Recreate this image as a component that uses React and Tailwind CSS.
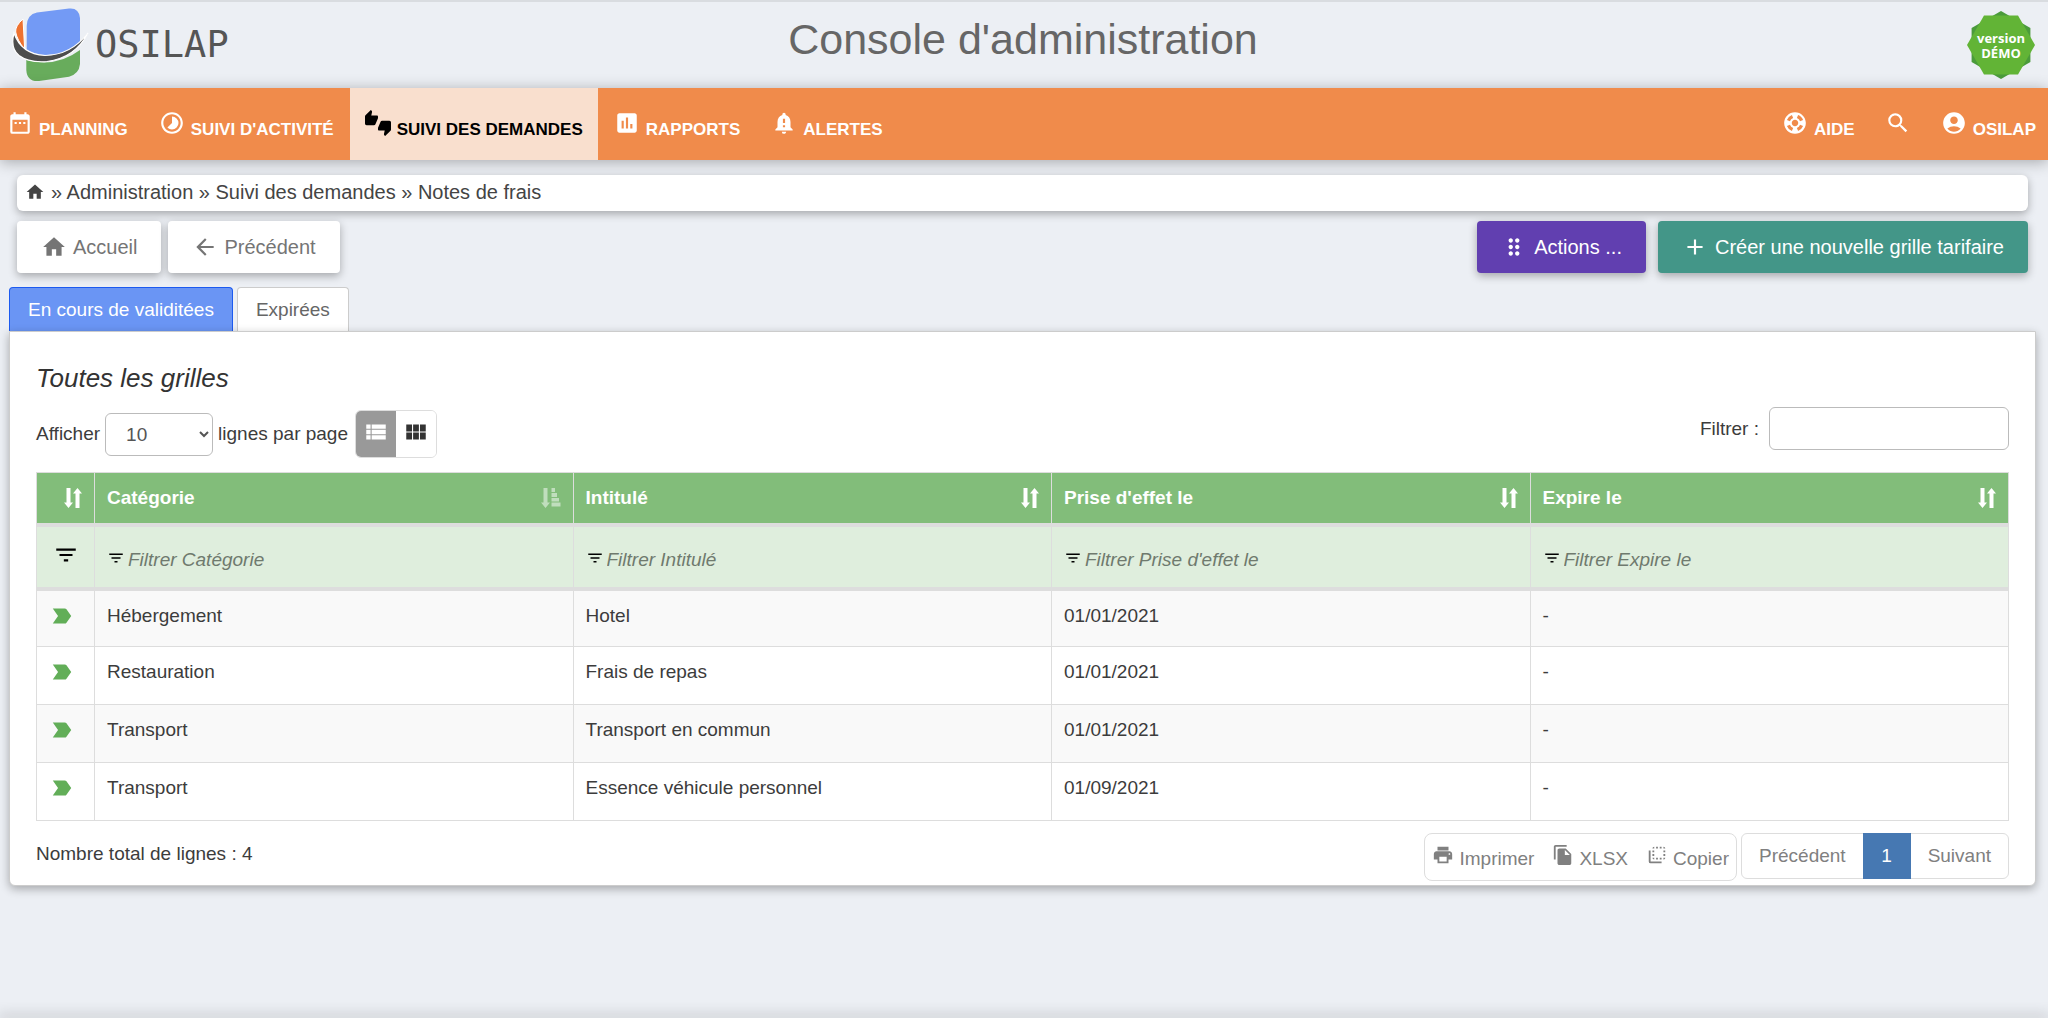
import React, { useState } from 'react';
import {
  MdDateRange,
  MdTimelapse,
  MdThumbsUpDown,
  MdAssessment,
  MdNotificationImportant,
  MdSupport,
  MdSearch,
  MdAccountCircle,
  MdHome,
  MdArrowBack,
  MdDragIndicator,
  MdAdd,
  MdViewList,
  MdViewModule,
  MdFilterList,
  MdLabelImportant,
  MdPrint,
  MdFileCopy,
  MdFlipToBack,
} from 'react-icons/md';

const navLeft = [
  { label: 'PLANNING', icon: MdDateRange },
  { label: "SUIVI D'ACTIVITÉ", icon: MdTimelapse },
  { label: 'SUIVI DES DEMANDES', icon: MdThumbsUpDown, active: true },
  { label: 'RAPPORTS', icon: MdAssessment },
  { label: 'ALERTES', icon: MdNotificationImportant },
];

const navRight = [
  { label: 'AIDE', icon: MdSupport },
  { label: '', icon: MdSearch },
  { label: 'OSILAP', icon: MdAccountCircle },
];

const columns = ['Catégorie', 'Intitulé', "Prise d'effet le", 'Expire le'];

const rows = [
  ['Hébergement', 'Hotel', '01/01/2021', '-'],
  ['Restauration', 'Frais de repas', '01/01/2021', '-'],
  ['Transport', 'Transport en commun', '01/01/2021', '-'],
  ['Transport', 'Essence véhicule personnel', '01/09/2021', '-'],
];

const Logo = () => (
  <a href="#accueil" className="flex items-center gap-1.5 pt-1">
    <svg viewBox="0 0 78 76" className="w-[78px] h-[76px]" aria-hidden="true">
      <path d="M15.700 20 Q16 8.500 26 6.500 L58 2.500 Q68 1.500 69 12 V38 Q56 49 36 49 Q24 49 15.700 44 Z" fill="#739af5" />
      <path d="M15.300 54 Q45 62 69 44 V58 Q68 68 58 70.700 L28 75 Q16 76 15.300 64 Z" fill="#68ac5c" />
      <path d="M12 13 Q4 20 4.700 26 Q6 34 13.700 43.500 Z" fill="#ee7230" stroke="#fff" strokeWidth="1" />
      <path d="M3 27 Q-1 42 8 49.500 Q18 57 36 55.500 Q64 52 77 27 Q60 49 34 49.500 Q10 48 3 27 Z" fill="#4d4d4d" stroke="#fff" strokeWidth="1.200" />
    </svg>
    <span className="font-['DejaVu_Sans_Mono',monospace] text-[37px] leading-none text-[#555]">OSILAP</span>
  </a>
);

const DemoBadge = () => (
  <svg viewBox="0 0 68 68" className="w-[68px] h-[68px]" role="img" aria-label="version DÉMO">
    <path d="M34 0 L63.400 17 V51 L34 68 L4.600 51 V17 Z" fill="#4b9b3b" />
    <path d="M17 4.600 H51 L68 34 L51 63.400 H17 L0 34 Z" fill="#62b436" />
    <text x="34" y="32" textAnchor="middle" fill="#fff" fontFamily="Open Sans, sans-serif" fontWeight="700" fontSize="13">version</text>
    <text x="34" y="47" textAnchor="middle" fill="#fff" fontFamily="Open Sans, sans-serif" fontWeight="700" fontSize="13">DÉMO</text>
  </svg>
);

const NavItem = ({ label, icon: Icon, active }) => (
  <li>
    <a
      href="#menu"
      aria-label={label || 'Rechercher'}
      className={`flex items-end gap-1.5 h-[72px] px-[15px] pb-[18px] text-[17px] leading-6 font-bold whitespace-nowrap ${
        active ? 'bg-[#f9dfce] text-black' : 'text-white'
      }`}
    >
      <Icon className="w-[26px] h-[26px] mb-1.5" />
      {label && <span>{label}</span>}
    </a>
  </li>
);

const SortIcon = () => (
  <svg viewBox="0 0 18 20" className="w-[18px] h-5 fill-white" aria-hidden="true">
    <path d="M2.500 0 H6.500 V14.500 H9 L4.500 20 L0 14.500 H2.500 Z" />
    <path d="M11.500 20 H15.500 V5.500 H18 L13.500 0 L9 5.500 H11.500 Z" />
  </svg>
);

const SortAscIcon = () => (
  <svg viewBox="0 0 20 20" className="w-5 h-5 fill-white opacity-50" aria-hidden="true">
    <path d="M2.500 0 H6.500 V14.500 H9 L4.500 20 L0 14.500 H2.500 Z" />
    <path d="M10.500 0 H14 V4 H10.500 Z M10.500 5 H16 V9 H10.500 Z M10.500 10 H18 V13.500 H10.500 Z M10.500 14.500 H19.500 V18.500 H10.500 Z" />
  </svg>
);

const App = () => {
  const [pageSize, setPageSize] = useState('10');
  const [search, setSearch] = useState('');
  const [tab, setTab] = useState('valid');

  const tabClass = (name) =>
    tab === name
      ? 'bg-[#6a95f4] border-[#1c5af0] text-white'
      : 'bg-white border-[#ccc] text-[#666]';

  return (
    <div className="min-h-screen flex flex-col overflow-hidden bg-[#eceff4] font-['Liberation_Sans',Arial,sans-serif] text-[19px] leading-[26px] text-[#3c3c3c]">
      <header className="grid grid-cols-3 items-start h-[88px] border-t-2 border-[#d9dce0] pl-[11px] pr-[13px]">
        <Logo />
        <h1 className="pt-2.5 text-center text-[43px] leading-[54px] text-[#666] whitespace-nowrap">
          Console d'administration
        </h1>
        <div className="flex justify-end pt-[9px]">
          <DemoBadge />
        </div>
      </header>

      <nav className="flex justify-between bg-[#f08b4b] shadow-[0_2px_14px_rgba(0,0,0,0.3)]">
        <ul className="flex gap-px -ml-2">
          {navLeft.map((item) => (
            <NavItem key={item.label} {...item} />
          ))}
        </ul>
        <ul className="flex -mr-[3px]">
          {navRight.map((item) => (
            <NavItem key={item.label} {...item} />
          ))}
        </ul>
      </nav>

      <div className="mt-[15px] ml-[17px] mr-5 flex items-center gap-1.5 h-9 px-2 pb-0.5 bg-white rounded-md shadow-[0_3px_8px_rgba(0,0,0,0.3)] text-xl text-[#444]">
        <a href="#accueil" aria-label="Accueil">
          <MdHome className="w-5 h-5" />
        </a>
        <span>» Administration » Suivi des demandes » Notes de frais</span>
      </div>

      <div className="mt-2.5 ml-[17px] mr-5 flex justify-between text-xl">
        <div className="flex gap-[7px] text-[#757575]">
          <button type="button" className="flex items-center gap-1.5 h-[52px] px-6 bg-white rounded shadow-[0_3px_8px_rgba(0,0,0,0.3)]">
            <MdHome className="w-[26px] h-[26px]" />
            Accueil
          </button>
          <button type="button" className="flex items-center gap-1.5 h-[52px] px-6 bg-white rounded shadow-[0_3px_8px_rgba(0,0,0,0.3)]">
            <MdArrowBack className="w-[26px] h-[26px]" />
            Précédent
          </button>
        </div>
        <div className="flex gap-3 text-white">
          <button type="button" className="flex items-center gap-[7px] h-[52px] px-6 bg-[#613fb0] rounded shadow-[0_3px_8px_rgba(0,0,0,0.3)]">
            <MdDragIndicator className="w-[26px] h-[26px]" />
            Actions ...
          </button>
          <button type="button" className="flex items-center gap-[7px] h-[52px] px-6 bg-[#439688] rounded shadow-[0_3px_8px_rgba(0,0,0,0.3)]">
            <MdAdd className="w-[26px] h-[26px]" />
            Créer une nouvelle grille tarifaire
          </button>
        </div>
      </div>

      <div className="mt-3.5 ml-[9px] flex gap-1" role="tablist">
        <button
          type="button"
          role="tab"
          aria-selected={tab === 'valid'}
          onClick={() => setTab('valid')}
          className={`h-11 px-[18px] border border-b-0 rounded-t ${tabClass('valid')}`}
        >
          En cours de validitées
        </button>
        <button
          type="button"
          role="tab"
          aria-selected={tab === 'expired'}
          onClick={() => setTab('expired')}
          className={`h-11 px-[18px] border border-b-0 rounded-t ${tabClass('expired')}`}
        >
          Expirées
        </button>
      </div>

      <main className="ml-[9px] mr-3 px-[26px] pb-1 bg-white border border-[#ccc] rounded-b-md shadow-[0_3px_10px_rgba(0,0,0,0.3)]">
        <h2 className="pt-[30px] text-[26px] leading-8 italic text-[#333]">Toutes les grilles</h2>

        <div className="mt-[13px] flex items-start justify-between">
          <div className="flex items-center gap-[5px] pt-[3px]">
            <label htmlFor="page-size">Afficher</label>
            <select
              id="page-size"
              value={pageSize}
              onChange={(e) => setPageSize(e.target.value)}
              className="w-[108px] h-[43px] pl-4 border border-[#bbb] rounded-md bg-white text-[#555]"
            >
              <option value="10">10</option>
              <option value="25">25</option>
              <option value="50">50</option>
            </select>
            <label htmlFor="page-size">lignes par page</label>
            <div className="ml-0.5 flex h-12 border border-[#ddd] rounded-md overflow-hidden">
              <button type="button" aria-label="Liste" className="flex justify-center w-10 pt-2 bg-[#999] text-white">
                <MdViewList className="w-[26px] h-[26px]" />
              </button>
              <button type="button" aria-label="Grille" className="flex justify-center w-10 pt-2 bg-white text-[#333]">
                <MdViewModule className="w-[26px] h-[26px]" />
              </button>
            </div>
          </div>
          <div className="flex items-center gap-2.5">
            <label htmlFor="search">Filtrer :</label>
            <input
              id="search"
              type="text"
              value={search}
              onChange={(e) => setSearch(e.target.value)}
              className="w-60 h-[43px] px-3 border border-[#bbb] rounded-md bg-white"
            />
          </div>
        </div>

        <table className="mt-3.5 w-full table-fixed border-collapse border border-[#ddd]">
          <colgroup>
            <col className="w-[58px]" />
            <col />
            <col />
            <col />
            <col />
          </colgroup>
          <thead>
            <tr className="h-[52px] bg-[#82bd7a] text-white text-left border-b-4 border-[#ddd]">
              <th className="border-x border-[#ddd] pr-3">
                <div className="flex justify-end">
                  <SortIcon />
                </div>
              </th>
              {columns.map((col, i) => (
                <th key={col} className="border-x border-[#ddd] px-3">
                  <div className="flex items-center justify-between">
                    {col}
                    {i === 0 ? <SortAscIcon /> : <SortIcon />}
                  </div>
                </th>
              ))}
            </tr>
            <tr className="h-16 bg-[#dfeedd] border-b-4 border-[#ddd]">
              <th className="border-x border-[#ddd] text-black">
                <MdFilterList className="mx-auto mb-1 w-[26px] h-[26px]" />
              </th>
              {columns.map((col) => (
                <th key={col} className="border-x border-[#ddd] px-3 pt-1.5 font-normal">
                  <div className="flex items-center gap-[3px]">
                    <MdFilterList className="shrink-0 mb-1 w-[18px] h-[18px] text-black" />
                    <input
                      type="text"
                      aria-label={`Filtrer ${col}`}
                      placeholder={`Filtrer ${col}`}
                      className="w-full bg-transparent italic placeholder:text-[#6f7a6e]"
                    />
                  </div>
                </th>
              ))}
            </tr>
          </thead>
          <tbody>
            {rows.map((row) => (
              <tr key={row[1]} className="h-[58px] odd:bg-[#f9f9f9] border-b border-[#ddd] align-top">
                <td className="border-x border-[#ddd] pt-3 pr-2">
                  <MdLabelImportant className="mx-auto w-[26px] h-[26px] text-[#62ae58]" />
                </td>
                {row.map((cell, i) => (
                  <td key={columns[i]} className="border-x border-[#ddd] px-3 pt-3">
                    {cell}
                  </td>
                ))}
              </tr>
            ))}
          </tbody>
        </table>

        <div className="mt-3 flex items-start justify-between">
          <p className="pt-2">Nombre total de lignes : 4</p>
          <div className="flex items-start gap-1 text-[#808080]">
            <div className="flex gap-1 h-12 border border-[#ddd] rounded-lg">
              <button type="button" className="flex items-center gap-[5px] px-[7px] pt-1">
                <MdPrint className="w-[22px] h-[22px] mb-2" />
                Imprimer
              </button>
              <button type="button" className="flex items-center gap-[5px] px-[7px] pt-1">
                <MdFileCopy className="w-[22px] h-[22px] mb-2" />
                XLSX
              </button>
              <button type="button" className="flex items-center gap-[5px] px-[7px] pt-1">
                <MdFlipToBack className="w-[22px] h-[22px] mb-2" />
                Copier
              </button>
            </div>
            <div className="flex h-[46px] border border-[#ddd] rounded-md">
              <button type="button" className="px-[17px]">Précédent</button>
              <button type="button" className="-my-px w-12 bg-[#4678b2] text-white">1</button>
              <button type="button" className="px-[17px]">Suivant</button>
            </div>
          </div>
        </div>
      </main>

      <footer className="mt-auto shadow-[0_0_14px_2px_rgba(0,0,0,0.3)]" />
    </div>
  );
};

export default App;
